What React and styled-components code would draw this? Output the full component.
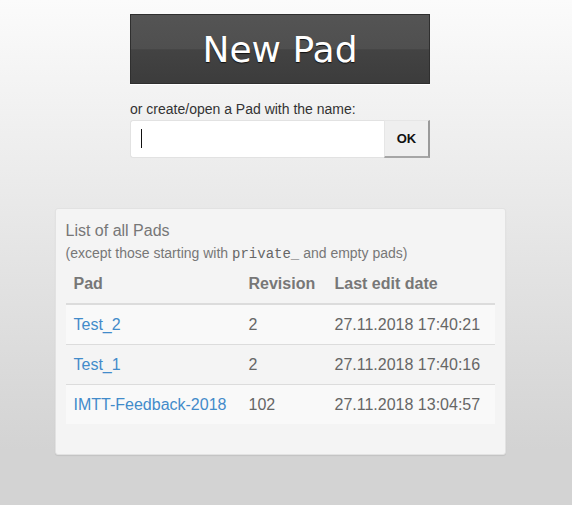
import React from "react";
import styled, { createGlobalStyle } from "styled-components";

const GlobalStyle = createGlobalStyle`
  html, body {
    margin: 0;
    padding: 0;
  }
  body {
    min-height: 505px;
    background: linear-gradient(to bottom, #fbfbfb 0px, #d3d3d3 450px, #d3d3d3 100%);
    font-family: "Liberation Sans", Arial, sans-serif;
    color: #555;
  }
`;

const Page = styled.div`
  display: flex;
  flex-direction: column;
  align-items: center;
  padding: 14px 12px 50px 0;
`;

const Launcher = styled.div`
  width: 300px;
  display: flex;
  flex-direction: column;
`;

const BigButton = styled.button`
  height: 70px;
  width: 300px;
  border: 1px solid #2f2f2f;
  background: linear-gradient(to bottom, #545454 0%, #4f4f4f 50%, #434343 51%, #3c3c3c 100%);
  color: #fff;
  font-family: "DejaVu Sans", Verdana, sans-serif;
  font-size: 36px;
  text-shadow: 0 1px 1px #111;
  cursor: pointer;
  padding: 0;
  box-shadow: 0 1px 0 #fff;
`;

const Label = styled.label`
  margin-top: 17px;
  font-size: 14px;
  color: #333;
  line-height: 16px;
`;

const InputRow = styled.form`
  display: flex;
  margin-top: 3px;
  height: 38px;
`;

const Field = styled.div`
  position: relative;
  flex: 1;
  display: flex;
`;

const NameInput = styled.input`
  flex: 1;
  min-width: 0;
  border: 1px solid #e2e2e2;
  border-right: none;
  border-radius: 3px 0 0 3px;
  background: #fff;
  font-size: 16px;
  padding: 0 10px;
  outline: none;
  caret-color: transparent;
  font-family: "Liberation Sans", Arial, sans-serif;
`;

const Caret = styled.span`
  position: absolute;
  left: 11px;
  top: 9px;
  width: 1px;
  height: 19px;
  background: #111;
  pointer-events: none;
`;

const OkButton = styled.button`
  width: 46px;
  border: 1px solid #e6e6e6;
  border-right: 2px solid #9a9a9a;
  border-bottom: 2px solid #a6a6a6;
  background: #efefef;
  font-family: "Liberation Sans", Arial, sans-serif;
  font-weight: bold;
  font-size: 13px;
  color: #111;
  padding: 0;
`;

const Panel = styled.section`
  margin-top: 50px;
  width: 429px;
  padding: 10px 10px 30px;
  background: #f4f4f4;
  border: 1px solid #e2e2e2;
  border-radius: 3px;
  box-shadow: 0 1px 1px rgba(0, 0, 0, 0.08);
`;

const Title = styled.h2`
  margin: 0;
  font-weight: normal;
  font-size: 16px;
  line-height: 24px;
  color: #777;
`;

const Sub = styled.p`
  margin: 0;
  font-size: 14px;
  line-height: 20px;
  color: #777;
  code {
    font-family: "Liberation Mono", "Courier New", monospace;
    font-size: 14px;
    color: #666;
  }
`;

const Table = styled.table`
  width: 100%;
  border-collapse: collapse;
  font-size: 16px;
  th, td {
    text-align: left;
    padding: 8px;
    line-height: 23px;
  }
  th {
    color: #777;
    font-weight: bold;
    border-bottom: 2px solid #dcdcdc;
  }
  td {
    color: #666;
    border-top: 1px solid #dcdcdc;
  }
`;

const Row = styled.tr`
  background: ${(p) => (p.$striped ? "#f9f9f9" : "transparent")};
  td:first-child {
    width: 159px;
  }
  td:nth-child(2) {
    width: 70px;
  }
`;

const PadLink = styled.a`
  color: #428bca;
  text-decoration: none;
`;

const pads = [
  { name: "Test_2", rev: 2, date: "27.11.2018 17:40:21" },
  { name: "Test_1", rev: 2, date: "27.11.2018 17:40:16" },
  { name: "IMTT-Feedback-2018", rev: 102, date: "27.11.2018 13:04:57" },
];

export default function App() {
  return (
    <>
      <GlobalStyle />
      <Page>
        <Launcher>
          <BigButton type="button">New Pad</BigButton>
          <Label htmlFor="padname">or create/open a Pad with the name:</Label>
          <InputRow onSubmit={(e) => e.preventDefault()}>
            <Field>
              <NameInput id="padname" type="text" autoFocus />
              <Caret />
            </Field>
            <OkButton type="submit">OK</OkButton>
          </InputRow>
        </Launcher>
        <Panel>
          <Title>List of all Pads</Title>
          <Sub>
            (except those starting with <code>private_</code> and empty pads)
          </Sub>
          <Table>
            <thead>
              <tr>
                <th>Pad</th>
                <th>Revision</th>
                <th>Last edit date</th>
              </tr>
            </thead>
            <tbody>
              {pads.map((p, i) => (
                <Row key={p.name} $striped={i % 2 === 0}>
                  <td>
                    <PadLink href="#">{p.name}</PadLink>
                  </td>
                  <td>{p.rev}</td>
                  <td>{p.date}</td>
                </Row>
              ))}
            </tbody>
          </Table>
        </Panel>
      </Page>
    </>
  );
}
